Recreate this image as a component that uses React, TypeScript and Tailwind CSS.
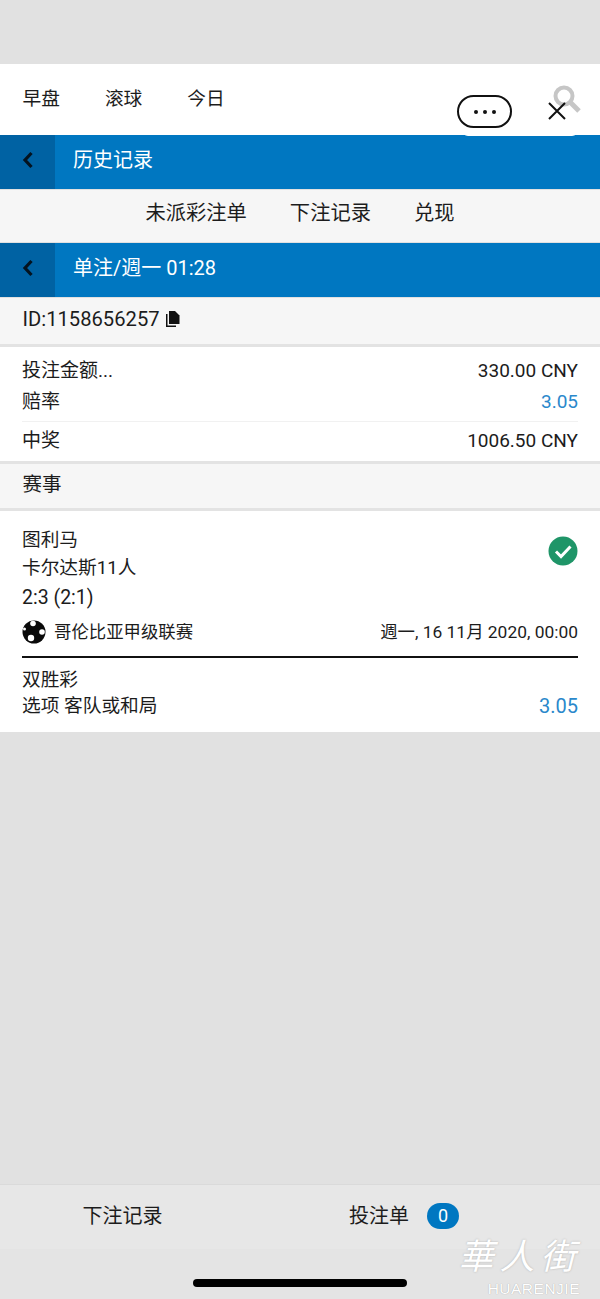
import React from 'react';

const font = { fontFamily: 'Roboto, "Noto Sans CJK SC", sans-serif' };

const BlueBar = ({ title }: { title: string }) => (
  <div className="flex h-[54px] bg-[#0077c1] mb-px">
    <div className="flex w-[55px] items-center justify-center bg-[#0062a3] pb-[4px]">
      <svg width="12" height="18" viewBox="0 0 12 18" fill="none" stroke="#04131f" strokeWidth="3.2">
        <path d="M9.5 2 3 9l6.500 7" />
      </svg>
    </div>
    <div className="pl-[18px] text-[20px] leading-[50px] text-white">{title}</div>
  </div>
);

const CopyIcon = () => (
  <svg width="15" height="17" viewBox="0 0 15 17" fill="#111">
    <path d="M4 0h6l4.500 4.500V13H4z" />
    <path d="M1 3h1.500v11.500H11V16H1z" />
  </svg>
);

const Ball = () => (
  <svg width="24" height="24" viewBox="0 0 24 24">
    <circle cx="12" cy="12" r="11.500" fill="#0a0a0a" />
    <circle cx="11" cy="3.500" r="2.800" fill="#fff" />
    <circle cx="20" cy="12" r="2.800" fill="#fff" />
    <circle cx="9" cy="18" r="3.200" fill="#fff" />
    <circle cx="2.500" cy="9" r="1.500" fill="#fff" />
  </svg>
);

export default function App() {
  return (
    <div className="relative h-[1299px] w-[600px] overflow-hidden bg-[#e1e1e1] text-[#1c1c1c]" style={font}>
      <div className="h-16" />

      {/* top nav */}
      <div className="flex h-[71px] items-start gap-[45px] bg-white pl-[22.500px] pt-[24px] text-[18.700px] leading-[22px]">
        <span>早盘</span>
        <span>滚球</span>
        <span>今日</span>
      </div>

      <BlueBar title="历史记录" />

      <div className="flex h-[52px] items-center justify-center gap-[43px] bg-[#f6f6f6] pb-[5px] text-[20.300px] mb-px">
        <span>未派彩注单</span>
        <span>下注记录</span>
        <span>兑现</span>
      </div>

      <BlueBar title="单注/週一 01:28" />

      <div className="flex h-[49px] items-center gap-[5px] border-b-[3px] border-[#e3e3e3] bg-[#f6f6f6] pb-[3px] pl-[22.500px] text-[20.200px]">
        <span>ID:1158656257</span>
        <CopyIcon />
      </div>

      {/* stake */}
      <div className="bg-white px-[22px] pt-[10px] text-[19px]">
        <div className="flex h-[29px] items-center justify-between">
          <span>投注金额...</span>
          <span>330.00 CNY</span>
        </div>
        <div className="flex h-[36px] items-center justify-between border-b border-[#f1f1f1] pb-[3px]">
          <span>赔率</span>
          <span className="text-[#2a88cb]">3.05</span>
        </div>
        <div className="flex h-[39px] items-center justify-between">
          <span>中奖</span>
          <span>1006.50 CNY</span>
        </div>
      </div>

      <div className="flex h-[50px] items-center border-y-[3px] border-[#e3e3e3] bg-[#f6f6f6] pb-[3px] pl-[22.500px] text-[19.500px]">
        赛事
      </div>

      {/* event */}
      <div className="bg-white px-[22px] pt-[16px] text-[18.700px]">
        <div className="flex justify-between">
          <div className="leading-[26px]">
            <div className="h-[27px]">图利马</div>
            <div className="h-[30px] leading-[28px]">卡尔达斯11人</div>
            <div className="h-[31px] leading-[28px] text-[19.500px]">2:3 (2:1)</div>
          </div>
          <svg width="30" height="30" viewBox="0 0 30 30" className="mt-[9px]">
            <circle cx="15" cy="15" r="14.500" fill="#1f9568" />
            <path d="M8 15.500l5 5 9.500-10" fill="none" stroke="#fff" strokeWidth="3" />
          </svg>
        </div>
        <div className="flex h-[43px] items-center justify-between border-b-2 border-[#111] pb-[12px] pt-[5px] text-[17.400px]">
          <div className="flex items-center gap-[8px]">
            <Ball />
            <span>哥伦比亚甲级联赛</span>
          </div>
          <span>週一, 16 11月 2020, 00:00</span>
        </div>
        <div className="pt-[9px] leading-[26px]">双胜彩</div>
        <div className="flex h-[39px] justify-between pb-[13px] leading-[26px]">
          <span>选项 客队或和局</span>
          <span className="text-[20px] text-[#2a88cb]">3.05</span>
        </div>
      </div>

      {/* bottom bar */}
      <div className="absolute bottom-[50px] left-0 flex h-[65px] w-full border-t border-[#dadada] bg-[#e7e7e7] text-[20px]">
        <div className="flex w-[245px] items-center justify-center pb-[3px]">下注记录</div>
        <div className="flex flex-1 items-center gap-[18px] pb-[3px] pl-[104px]">
          <span>投注单</span>
          <span className="flex h-[26px] w-[32px] items-center justify-center rounded-full bg-[#0077c1] text-[18px] text-white">0</span>
        </div>
      </div>
      <div className="absolute bottom-0 left-0 h-[50px] w-full bg-[#e4e4e4]" />

      {/* home indicator */}
      <div className="absolute bottom-[12px] left-[193px] h-[8px] w-[214px] rounded-full bg-black" />

      {/* watermark */}
      <div className="absolute bottom-[2px] left-[455px] flex w-[130px] flex-col items-center text-white">
        <span className="mb-[4px] whitespace-nowrap text-[35px] italic leading-[38px] tracking-[6px] [text-shadow:0_0_2px_#aaa]">華人街</span>
        <span className="self-end pr-[5px] text-[15.500px] leading-[16px] tracking-[0.500px] [text-shadow:0_0_1px_#999]" style={{ fontFamily: '"Liberation Sans", sans-serif' }}>HUARENJIE</span>
      </div>

      {/* search icon behind the mini program capsule */}
      <svg width="30" height="36" viewBox="0 0 30 36" fill="none" stroke="#c6c6c6" className="absolute left-[552px] top-[84px]">
        <circle cx="12" cy="12" r="8.500" strokeWidth="4" />
        <path d="M18 18l9 9" strokeWidth="5" />
      </svg>

      {/* white strip below capsule */}
      <div className="absolute left-[462px] top-[130px] h-[6px] w-[116px] rounded-b-[8px] bg-white" />

      {/* capsule */}
      <div className="absolute left-[457px] top-[95px] flex h-[33px] w-[55px] items-center justify-center gap-[5px] rounded-full border-[2.500px] border-[#111] bg-white">
        <span className="h-[4px] w-[4px] rounded-full bg-[#111]" />
        <span className="h-[4px] w-[4px] rounded-full bg-[#111]" />
        <span className="h-[4px] w-[4px] rounded-full bg-[#111]" />
      </div>
      <svg width="20" height="20" viewBox="0 0 20 20" stroke="#111" strokeWidth="2" className="absolute left-[547px] top-[101px]">
        <path d="M2 2l16 16M18 2 2 18" />
      </svg>
    </div>
  );
}
